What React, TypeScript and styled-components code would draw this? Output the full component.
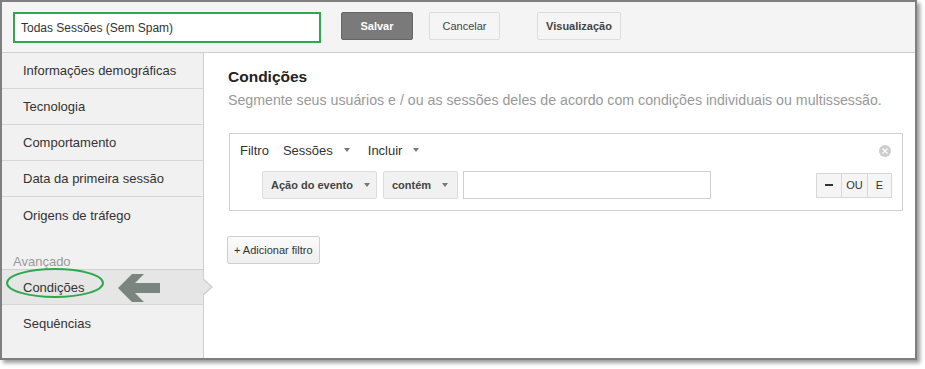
import React from 'react'
import styled, { createGlobalStyle } from 'styled-components'

const GlobalStyle = createGlobalStyle`
  html, body {
    margin: 0;
    padding: 0;
    background: #ffffff;
  }
  body {
    font-family: 'Liberation Sans', Arial, sans-serif;
    width: 925px;
    height: 369px;
    overflow: hidden;
  }
`

const Frame = styled.div`
  position: relative;
  width: 913px;
  height: 356px;
  border: 2px solid #7f7f7f;
  box-shadow: 3px 3px 4px rgba(0, 0, 0, 0.4);
  background: #ffffff;
  display: flex;
  flex-direction: column;
  overflow: hidden;
`

const TopBar = styled.div`
  display: flex;
  align-items: flex-start;
  height: 51px;
  padding: 10px 0 0 11px;
  box-sizing: border-box;
  background: #f4f4f4;
  border-bottom: 1px solid #cfcfcf;
`

const NameInput = styled.div`
  width: 308px;
  height: 31px;
  box-sizing: border-box;
  border: 2px solid #2eaa4e;
  background: #ffffff;
  display: flex;
  align-items: center;
  padding-left: 6px;
  font-size: 12px;
  color: #333;
`

const TopButton = styled.div<{ $primary?: boolean; $width: number; $gap: number; $bold?: boolean }>`
  width: ${({ $width }) => $width}px;
  height: 28px;
  margin-left: ${({ $gap }) => $gap}px;
  box-sizing: border-box;
  display: flex;
  align-items: center;
  justify-content: center;
  font-size: 11px;
  font-weight: ${({ $primary, $bold }) => ($primary || $bold ? 700 : 400)};
  color: ${({ $primary }) => ($primary ? '#ffffff' : '#444444')};
  background: ${({ $primary }) => ($primary ? '#7a7a7a' : '#f5f5f5')};
  border: 1px solid ${({ $primary }) => ($primary ? '#666666' : '#dcdcdc')};
  border-radius: 2px;
`

const Body = styled.div`
  flex: 1;
  display: flex;
  min-height: 0;
`

const Sidebar = styled.div`
  position: relative;
  width: 201px;
  background: #f1f1f1;
  border-right: 1px solid #cfcfcf;
  display: flex;
  flex-direction: column;
`

const NavItem = styled.div<{ $active?: boolean; $last?: boolean }>`
  position: relative;
  height: 36px;
  box-sizing: border-box;
  display: flex;
  align-items: center;
  padding-left: 21px;
  font-size: 13px;
  color: #333;
  background: ${({ $active }) => ($active ? '#e6e6e6' : 'transparent')};
  border-top: ${({ $active }) => ($active ? '1px solid #d0d0d0' : 'none')};
  border-bottom: ${({ $last }) => ($last ? 'none' : '1px solid #d6d6d6')};
`

const Pointer = styled.div`
  position: absolute;
  right: -10px;
  top: 8px;
  width: 0;
  height: 0;
  border-top: 9px solid transparent;
  border-bottom: 9px solid transparent;
  border-left: 10px solid #cfcfcf;
  &::after {
    content: '';
    position: absolute;
    left: -11px;
    top: -8px;
    border-top: 8px solid transparent;
    border-bottom: 8px solid transparent;
    border-left: 9px solid #e6e6e6;
  }
`

const SectionLabel = styled.div`
  height: 36px;
  box-sizing: border-box;
  display: flex;
  align-items: flex-end;
  padding: 0 0 0 11px;
  font-size: 13px;
  color: #999;
`

const Highlight = styled.svg`
  position: absolute;
  left: 4px;
  top: -2px;
  overflow: visible;
`

const BackArrow = styled.svg`
  position: absolute;
  left: 116px;
  top: 3px;
`

const Main = styled.div`
  flex: 1;
  padding: 14px 12px 0 24px;
  display: flex;
  flex-direction: column;
  align-items: flex-start;
`

const Title = styled.div`
  font-size: 15.5px;
  font-weight: 700;
  color: #222;
  line-height: 20px;
`

const Subtitle = styled.div`
  margin-top: 4px;
  font-size: 14.2px;
  color: #999;
  line-height: 18px;
  white-space: nowrap;
`

const FilterBox = styled.div`
  align-self: stretch;
  margin: 24px 0 0 1px;
  border: 1px solid #cfcfcf;
  padding: 7px 10px 11px 10px;
  position: relative;
`

const FilterHead = styled.div`
  display: flex;
  align-items: center;
  height: 18px;
  font-size: 13px;
  color: #333;
`

const HeadItem = styled.span<{ $gap: number }>`
  margin-left: ${({ $gap }) => $gap}px;
  display: inline-flex;
  align-items: center;
`

const Caret = styled.span`
  display: inline-block;
  margin-left: 11px;
  border-left: 3.5px solid transparent;
  border-right: 3.5px solid transparent;
  border-top: 4px solid #777;
`

const CloseDot = styled.div`
  position: absolute;
  right: 11px;
  top: 11px;
  width: 12px;
  height: 12px;
  border-radius: 50%;
  background: #cdcdcd;
  display: flex;
  align-items: center;
  justify-content: center;
`

const ConditionRow = styled.div`
  display: flex;
  align-items: center;
  margin-top: 12px;
  padding-left: 22px;
`

const Select = styled.div<{ $width: number; $gap?: number }>`
  width: ${({ $width }) => $width}px;
  height: 28px;
  margin-left: ${({ $gap }) => $gap ?? 0}px;
  box-sizing: border-box;
  display: flex;
  align-items: center;
  justify-content: space-between;
  padding: 0 9px 0 8px;
  background: #f1f1f1;
  border: 1px solid #dcdcdc;
  border-radius: 2px;
  font-size: 11px;
  font-weight: 700;
  color: #444;
  white-space: nowrap;
`

const ValueInput = styled.div`
  width: 248px;
  height: 28px;
  margin-left: 5px;
  box-sizing: border-box;
  border: 1px solid #cfcfcf;
  background: #fff;
`

const Logic = styled.div`
  margin-left: auto;
  display: flex;
  height: 25px;
  border: 1px solid #d8d8d8;
  box-sizing: border-box;
`

const LogicButton = styled.div<{ $width: number }>`
  width: ${({ $width }) => $width}px;
  display: flex;
  align-items: center;
  justify-content: center;
  background: #f5f5f5;
  font-size: 11px;
  color: #333;
  & + & {
    border-left: 1px solid #d8d8d8;
  }
`

const Dash = styled.span`
  width: 8px;
  height: 2px;
  background: #333;
`

const AddButton = styled.div`
  margin-top: 25px;
  margin-left: -1px;
  height: 28px;
  padding: 0 6px;
  box-sizing: border-box;
  display: flex;
  align-items: center;
  font-size: 11px;
  color: #333;
  border: 1px solid #cfcfcf;
  border-radius: 2px;
  background: linear-gradient(#fbfbfb, #eeeeee);
`

const navItems = [
  'Informações demográficas',
  'Tecnologia',
  'Comportamento',
  'Data da primeira sessão',
  'Origens de tráfego',
]

export default function App() {
  return (
    <>
      <GlobalStyle />
      <Frame>
        <TopBar>
          <NameInput>Todas Sessões (Sem Spam)</NameInput>
          <TopButton $primary $width={72} $gap={20}>
            Salvar
          </TopButton>
          <TopButton $width={71} $gap={16}>
            Cancelar
          </TopButton>
          <TopButton $width={84} $gap={37} $bold>
            Visualização
          </TopButton>
        </TopBar>
        <Body>
          <Sidebar>
            {navItems.map((label, i) => (
              <NavItem key={label} $last={i === navItems.length - 1}>
                {label}
              </NavItem>
            ))}
            <SectionLabel>Avançado</SectionLabel>
            <NavItem $active>
              Condições
              <Highlight width="98" height="30" viewBox="0 0 98 30">
                <ellipse cx="49" cy="15" rx="48" ry="14" fill="none" stroke="#2eaa4e" strokeWidth="2" />
              </Highlight>
              <BackArrow width="42" height="30" viewBox="0 0 42 30">
                <polygon
                  points="0,15 14,1 26,1 17,10 42,10 42,20 17,20 26,29 14,29"
                  fill="#7b8580"
                />
              </BackArrow>
              <Pointer />
            </NavItem>
            <NavItem $last>Sequências</NavItem>
          </Sidebar>
          <Main>
            <Title>Condições</Title>
            <Subtitle>
              Segmente seus usuários e / ou as sessões deles de acordo com condições individuais ou multissessão.
            </Subtitle>
            <FilterBox>
              <FilterHead>
                <span>Filtro</span>
                <HeadItem $gap={14}>
                  Sessões
                  <Caret />
                </HeadItem>
                <HeadItem $gap={18}>
                  Incluir
                  <Caret />
                </HeadItem>
              </FilterHead>
              <CloseDot>
                <svg width="6" height="6" viewBox="0 0 6 6">
                  <path d="M0.5 0.5 L5.5 5.5 M5.5 0.5 L0.5 5.5" stroke="#fff" strokeWidth="1.3" />
                </svg>
              </CloseDot>
              <ConditionRow>
                <Select $width={115}>
                  Ação do evento
                  <Caret />
                </Select>
                <Select $width={75} $gap={6}>
                  contém
                  <Caret />
                </Select>
                <ValueInput />
                <Logic>
                  <LogicButton $width={24}>
                    <Dash />
                  </LogicButton>
                  <LogicButton $width={25}>OU</LogicButton>
                  <LogicButton $width={23}>E</LogicButton>
                </Logic>
              </ConditionRow>
            </FilterBox>
            <AddButton>+ Adicionar filtro</AddButton>
          </Main>
        </Body>
      </Frame>
    </>
  )
}
